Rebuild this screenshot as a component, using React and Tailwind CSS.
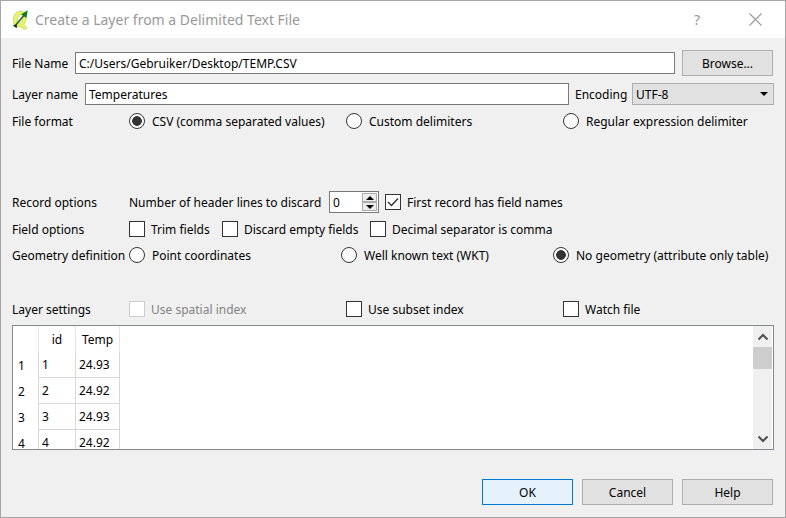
import React, { useState } from "react";

const ROWS = [
  ["1", "24.93"],
  ["2", "24.92"],
  ["3", "24.93"],
  ["4", "24.92"],
];

function Logo() {
  return (
    <svg width="18" height="20" viewBox="0 0 18 20" className="shrink-0" aria-hidden="true">
      <path d="M8.500 1 C4.500 1 1.500 5 1.300 9.800 C1.200 14 3.300 17 6.600 17 C7.400 17 8 16.800 8.700 16.500 C9.800 18.500 11 19.500 12.800 19.300 C14 19.200 14.800 18.500 15.200 17.500 C13.800 17.700 12.800 16.500 12 14.200 C13.400 12.400 14.200 10 14.200 7.500 C14.200 3.700 12 1 8.500 1 Z M9 4.500 C10.500 4.500 10.800 6.200 10.300 8.500 C9.700 11.500 8.300 13.500 6.800 13.500 C5.200 13.500 4.900 11.800 5.400 9.500 C6 6.500 7.400 4.500 9 4.500 Z" fill="#e9f462" stroke="#b9c46a" strokeWidth="0.6" fillRule="evenodd" />
      <path d="M3.500 15.200 L12.500 4.800" stroke="#2b6b2b" strokeWidth="1.700" />
      <path d="M15.800 0.300 L9.300 4.200 L14.300 8 Z" fill="#0a7a1c" />
      <path d="M0.800 15.500 L4.800 14 L5 18 L3 17.200 Z" fill="#143c18" />
    </svg>
  );
}

function Radio({ name, label, defaultChecked }) {
  return (
    <label className="flex h-4 items-center gap-[7px] whitespace-nowrap">
      <input
        type="radio"
        name={name}
        defaultChecked={defaultChecked}
        className="size-4 shrink-0 appearance-none rounded-full border border-[#333333] bg-white checked:bg-[radial-gradient(circle,#333333_0_4.5px,#ffffff_5.2px)]"
      />
      <span className="pt-0.5">{label}</span>
    </label>
  );
}

function Check({ label, defaultChecked, disabled }) {
  return (
    <label className={disabled ? "flex h-4 items-center gap-1.5 whitespace-nowrap text-[#838383]" : "flex h-4 items-center gap-1.5 whitespace-nowrap"}>
      <span className="relative flex size-4 shrink-0">
        <input
          type="checkbox"
          defaultChecked={defaultChecked}
          disabled={disabled}
          className="peer size-4 appearance-none border border-[#333333] bg-white disabled:border-[#cccccc]"
        />
        <svg viewBox="0 0 16 16" className="pointer-events-none absolute inset-0 hidden peer-checked:block" aria-hidden="true">
          <path d="M3 8 L6.500 11.500 L13 4.500" fill="none" stroke="#333333" strokeWidth="1.4" />
        </svg>
      </span>
      <span className="pt-0.5">{label}</span>
    </label>
  );
}

function OptionRow({ title, className, children }) {
  return (
    <div role="group" aria-label={title} className={`flex items-center ${className}`}>
      <div className="flex h-4 w-[117px] shrink-0 items-center whitespace-nowrap">
        <span className="pt-0.5">{title}</span>
      </div>
      {children}
    </div>
  );
}

function PushButton({ children, primary }) {
  return (
    <button
      type="button"
      className={
        primary
          ? "h-[26px] w-[91px] border border-[#0078d7] bg-[#e5f1fb] pt-0.5"
          : "h-[26px] w-[91px] border border-[#adadad] bg-[#e1e1e1] pt-0.5"
      }
    >
      {children}
    </button>
  );
}

function HeaderLines() {
  const [count, setCount] = useState(0);
  return (
    <div className="flex items-center">
      <label htmlFor="header-lines" className="w-[200px] pt-0.5 whitespace-nowrap">
        Number of header lines to discard
      </label>
      <div className="flex h-[22px] w-[50px] border border-[#7a7a7a] bg-white">
        <input
          id="header-lines"
          type="text"
          inputMode="numeric"
          value={count}
          onChange={(e) => setCount(Number(e.target.value) || 0)}
          className="min-w-0 flex-1 bg-white pt-0.5 pl-[3px] outline-none"
        />
        <div className="flex w-4 flex-col py-px pr-px">
          <button type="button" aria-label="Increase" onClick={() => setCount(count + 1)} className="flex flex-1 items-center justify-center border border-[#adadad] bg-[#ececec]">
            <svg width="8" height="4" viewBox="0 0 8 4" aria-hidden="true"><path d="M4 0 L8 4 H0 Z" fill="#000" /></svg>
          </button>
          <button type="button" aria-label="Decrease" onClick={() => setCount(Math.max(0, count - 1))} className="flex flex-1 items-center justify-center border border-[#adadad] bg-[#ececec]">
            <svg width="8" height="4" viewBox="0 0 8 4" aria-hidden="true"><path d="M0 0 H8 L4 4 Z" fill="#000" /></svg>
          </button>
        </div>
      </div>
    </div>
  );
}

function Preview() {
  return (
    <div className="mt-2 flex h-[125px] border border-[#828790] bg-white">
      <div className="min-w-0 flex-1 overflow-hidden">
        <table className="table-fixed border-separate border-spacing-0">
          <colgroup>
            <col className="w-[26px]" />
            <col className="w-[37px]" />
            <col className="w-[44px]" />
          </colgroup>
          <thead>
            <tr className="h-[26px]">
              <th className="border-r border-[#e5e5e5] p-0" />
              <th className="border-r border-[#e5e5e5] p-0 pt-0.5 font-normal">id</th>
              <th className="border-r border-[#e5e5e5] p-0 pt-0.5 font-normal">Temp</th>
            </tr>
          </thead>
          <tbody>
            {ROWS.map(([id, temp]) => (
              <tr key={id} className="h-[26px]">
                <th scope="row" className="border-r border-[#d8d8d8] p-0 pt-0.5 pl-[5px] text-left font-normal">{id}</th>
                <td className="border-r border-b border-[#d8d8d8] p-0 pl-[3px]">{id}</td>
                <td className="border-r border-b border-[#d8d8d8] p-0 pl-[3px]">{temp}</td>
              </tr>
            ))}
          </tbody>
        </table>
      </div>
      <div className="mr-px flex w-[19px] flex-col bg-[#f0f0f0]">
        <button type="button" aria-label="Scroll up" className="flex h-[21px] items-center justify-center">
          <svg width="10" height="8" viewBox="0 0 10 8" aria-hidden="true"><path d="M0.500 6.500 L5 2 L9.500 6.500" fill="none" stroke="#505050" strokeWidth="2" /></svg>
        </button>
        <div className="h-[22px] bg-[#cdcdcd]" />
        <div className="flex-1" />
        <button type="button" aria-label="Scroll down" className="flex h-[21px] items-center justify-center">
          <svg width="10" height="8" viewBox="0 0 10 8" aria-hidden="true"><path d="M0.500 1.500 L5 6 L9.500 1.500" fill="none" stroke="#505050" strokeWidth="2" /></svg>
        </button>
      </div>
    </div>
  );
}

export default function App() {
  return (
    <div className="flex min-h-screen flex-col border border-[#a5a5a5] bg-[#f0f0f0] font-['Noto_Sans','Open_Sans',sans-serif] text-[12px] leading-4 text-black">
      <header className="flex h-[37px] items-center bg-white pl-[11px]">
        <Logo />
        <h1 className="ml-[5px] flex-1 text-[14px] text-[#999999]">
          Create a Layer from a Delimited Text File
        </h1>
        <button type="button" aria-label="Help" className="flex h-full w-[56px] items-center justify-center text-[14px] text-[#999999]">
          ?
        </button>
        <button type="button" aria-label="Close" className="flex h-full w-[60px] items-center justify-center">
          <svg width="13" height="13" viewBox="0 0 13 13" aria-hidden="true"><path d="M0.500 0.500 L12.500 12.500 M12.500 0.500 L0.500 12.500" stroke="#999999" strokeWidth="1.1" /></svg>
        </button>
      </header>

      <main className="flex flex-1 flex-col px-[11px] pt-3 pb-3">
        <div className="flex items-center pr-px">
          <label htmlFor="file-name" className="w-[63px] shrink-0 pt-0.5">File Name</label>
          <input id="file-name" type="text" defaultValue="C:/Users/Gebruiker/Desktop/TEMP.CSV" className="mr-[7px] h-[22px] min-w-0 flex-1 border border-[#7a7a7a] bg-white px-[3px] outline-none" />
          <PushButton>Browse...</PushButton>
        </div>

        <div className="mt-[7px] flex items-center">
          <label htmlFor="layer-name" className="w-[73px] shrink-0 pt-0.5">Layer name</label>
          <input id="layer-name" type="text" defaultValue="Temperatures" className="h-[22px] min-w-0 flex-1 border border-[#7a7a7a] bg-white px-[3px] outline-none" />
          <label htmlFor="encoding" className="w-[63px] shrink-0 pt-0.5 pl-1.5">Encoding</label>
          <div className="relative">
            <select id="encoding" defaultValue="UTF-8" className="block h-[22px] w-[142px] appearance-none border border-[#adadad] bg-[#e1e1e1] pt-0.5 pl-[3px] outline-none">
              <option>UTF-8</option>
            </select>
            <svg width="8" height="4" viewBox="0 0 8 4" className="pointer-events-none absolute top-[9px] right-1.5" aria-hidden="true"><path d="M0 0 H8 L4 4 Z" fill="#000" /></svg>
          </div>
        </div>

        <OptionRow title="File format" className="mt-2">
          <div className="grid flex-1 grid-cols-3 gap-1.5">
            <Radio name="format" label="CSV (comma separated values)" defaultChecked />
            <Radio name="format" label="Custom delimiters" />
            <Radio name="format" label="Regular expression delimiter" />
          </div>
        </OptionRow>

        <OptionRow title="Record options" className="mt-[62px]">
          <div className="flex items-center gap-1.5">
            <HeaderLines />
            <Check label="First record has field names" defaultChecked />
          </div>
        </OptionRow>

        <OptionRow title="Field options" className="mt-2">
          <div className="grid grid-cols-[93px_148px_auto]">
            <Check label="Trim fields" />
            <Check label="Discard empty fields" />
            <Check label="Decimal separator is comma" />
          </div>
        </OptionRow>

        <OptionRow title="Geometry definition" className="mt-2.5">
          <div className="grid flex-1 grid-cols-[1fr_1fr_221px]">
            <Radio name="geometry" label="Point coordinates" />
            <Radio name="geometry" label="Well known text (WKT)" />
            <Radio name="geometry" label="No geometry (attribute only table)" defaultChecked />
          </div>
        </OptionRow>

        <OptionRow title="Layer settings" className="mt-[38px]">
          <div className="grid flex-1 grid-cols-3 gap-1.5">
            <Check label="Use spatial index" disabled />
            <Check label="Use subset index" />
            <Check label="Watch file" />
          </div>
        </OptionRow>

        <Preview />

        <div className="mt-[29px] flex justify-end gap-[9px] pr-px">
          <PushButton primary>OK</PushButton>
          <PushButton>Cancel</PushButton>
          <PushButton>Help</PushButton>
        </div>
      </main>
    </div>
  );
}
